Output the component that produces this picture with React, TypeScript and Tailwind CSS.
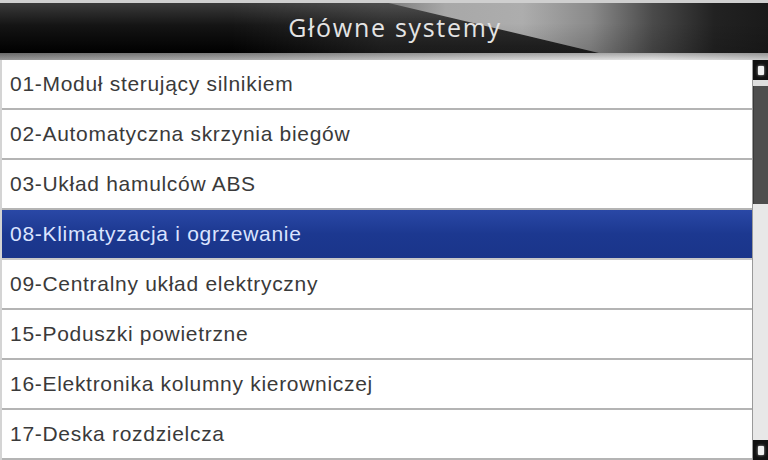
import React from 'react';

const systems = [
  '01-Moduł sterujący silnikiem',
  '02-Automatyczna skrzynia biegów',
  '03-Układ hamulców ABS',
  '08-Klimatyzacja i ogrzewanie',
  '09-Centralny układ elektryczny',
  '15-Poduszki powietrzne',
  '16-Elektronika kolumny kierowniczej',
  '17-Deska rozdzielcza',
];

const selectedIndex = 3;

const ScrollButton: React.FC = () => (
  <div className="h-[20px] bg-[#111111] flex items-center justify-center shrink-0">
    <div className="w-[6px] h-[9px] bg-[#f0f0f0] rounded-[1px] shadow-[0_0_3px_rgba(255,255,255,0.7)]" />
  </div>
);

export default function App() {
  return (
    <div className="w-[768px] h-[460px] overflow-hidden bg-white flex flex-col font-['Liberation_Sans',Arial,sans-serif]">
      {/* header */}
      <div className="h-[3px] bg-[#cfcfcf] shrink-0" />
      <div className="relative h-[50px] shrink-0 flex items-center justify-center pl-[22px] bg-[linear-gradient(to_right,rgba(255,255,255,0)_0%,rgba(255,255,255,0)_30%,rgba(255,255,255,0.1)_50%),linear-gradient(to_bottom,#3a3a3a_0%,#141414_45%,#000000_100%)]">
        {/* diagonal sheen */}
        <div className="absolute inset-0 [clip-path:polygon(50.6%_0,100%_0,100%_100%,78%_100%)] bg-[linear-gradient(to_bottom,rgba(0,0,0,0)_40%,rgba(0,0,0,0.15)_100%),linear-gradient(to_right,#7a7a7a_50%,#a8a8a8_58%,#adadad_68%,#8a8a8a_77%,#4a4a4a_85%,#222222_93%,#1a1a1a_100%)]" />
        <span className="relative text-[25px] leading-none text-[#e4e4e4] font-['Open_Sans',sans-serif] pb-[2px] tracking-[1.7px]">
          Główne systemy
        </span>
      </div>
      <div className="h-[7px] shrink-0 bg-[linear-gradient(to_bottom,rgba(0,0,0,0.25),rgba(255,255,255,0.1)),linear-gradient(to_right,#8c8c8c_0%,#a6a6a6_35%,#cfcfcf_65%,#e2e2e2_85%,#c4c4c4_100%)]" />

      <div className="flex flex-1 min-h-0">
        {/* list */}
        <div className="flex-1 flex flex-col border-l-2 border-[#d4d4d4]">
          {systems.map((name, i) => {
            const selected = i === selectedIndex;
            return (
              <div
                key={name}
                className={
                  selected
                    ? 'h-[50px] shrink-0 flex items-center pl-[8px] border-b-2 border-[#c8c8c8] bg-[linear-gradient(to_bottom,#2a48a6,#1c3890_50%,#1a358a)] text-[#dbe4ff]'
                    : 'h-[50px] shrink-0 flex items-center pl-[8px] border-b-2 border-[#b4b4b4] text-[#3a3a3a]'
                }
              >
                <span className="text-[21px] tracking-[0.7px]">{name}</span>
              </div>
            );
          })}
        </div>

        {/* scrollbar */}
        <div className="w-[16px] shrink-0 flex flex-col bg-[#e8e8e8] border-l border-[#9a9a9a]">
          <ScrollButton />
          <div className="h-[6px] shrink-0 bg-[#dedede]" />
          <div className="h-[118px] shrink-0 bg-[#4e4e4e] border-l border-[#3a3a3a]" />
          <div className="flex-1" />
          <ScrollButton />
        </div>
      </div>
    </div>
  );
}
